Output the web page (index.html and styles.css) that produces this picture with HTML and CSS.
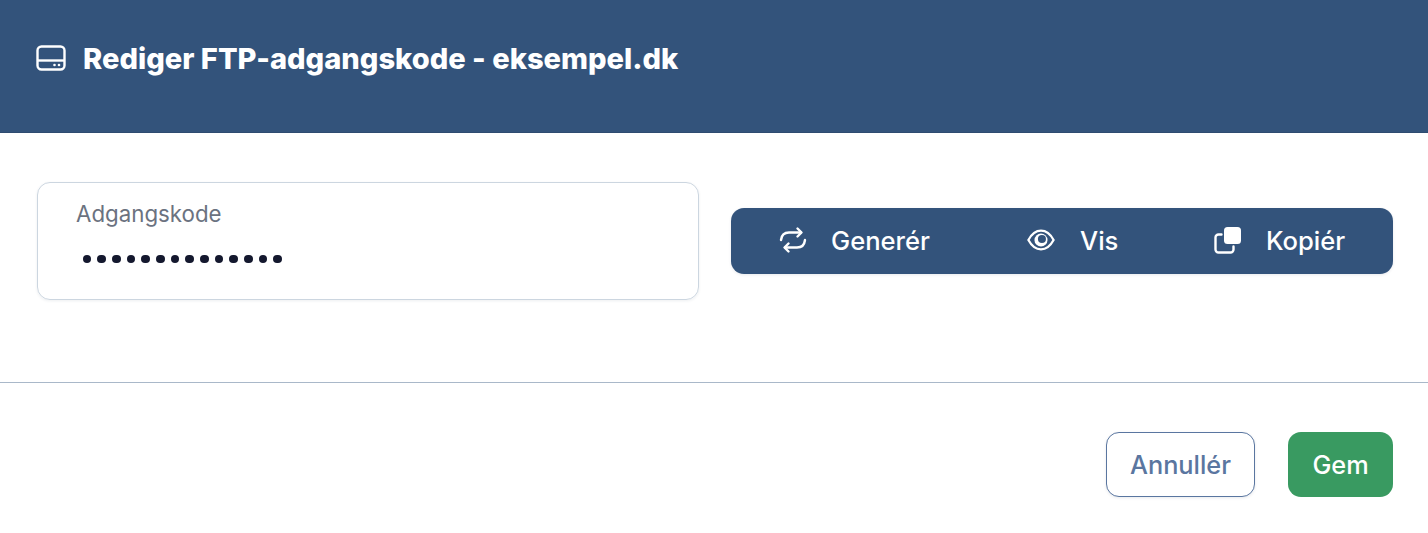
FILE: index.html
```html
<!DOCTYPE html>
<html lang="da">
<head>
    <meta charset="UTF-8">
    <title>Rediger FTP-adgangskode</title>
    <link rel="stylesheet" href="styles.css">
</head>
<body>
    <div class="modal">
        <header class="modal-header">
            <svg class="header-icon" viewBox="0 0 30 26" fill="none" stroke="#fff" stroke-width="2.400">
                <rect x="1.500" y="1.500" width="27" height="23" rx="4"/>
                <path d="M1.500 15.500h27"/>
                <circle cx="18.500" cy="20" r="1.300" fill="#fff" stroke="none"/>
                <circle cx="23" cy="20" r="1.300" fill="#fff" stroke="none"/>
            </svg>
            <h1 class="modal-title">Rediger FTP-adgangskode - eksempel.dk</h1>
        </header>
        <section class="modal-body">
            <div class="field">
                <label class="field-label">Adgangskode</label>
                <div class="field-dots">
                    <span class="dot"></span><span class="dot"></span><span class="dot"></span>
                    <span class="dot"></span><span class="dot"></span><span class="dot"></span>
                    <span class="dot"></span><span class="dot"></span><span class="dot"></span>
                    <span class="dot"></span><span class="dot"></span><span class="dot"></span>
                    <span class="dot"></span><span class="dot"></span>
                </div>
            </div>
            <div class="actions">
                <button class="action action-generate">
                    <svg class="action-icon" viewBox="0 0 28 28" fill="none" stroke="#fff" stroke-width="2.400" stroke-linecap="round" stroke-linejoin="round">
                        <path d="M18.500 2.500 22.500 6.500 18.500 10.500"/>
                        <path d="M22 6.500H10C5.500 6.500 2.500 9.500 2 14"/>
                        <path d="M9.500 25.500 5.500 21.500 9.500 17.500"/>
                        <path d="M6 21.500H18C22.500 21.500 25.500 18.500 26 14"/>
                    </svg>
                    <span>Generér</span>
                </button>
                <button class="action action-show">
                    <svg class="action-icon" viewBox="0 0 30 24" fill="none" stroke="#fff" stroke-width="2.400">
                        <path d="M1.500 12C5 5.500 9.500 2 15 2S25 5.500 28.500 12C25 18.500 20.500 22 15 22S5 18.500 1.500 12Z"/>
                        <circle cx="15" cy="12" r="7" fill="#fff" stroke="none"/>
                        <circle cx="16" cy="11" r="4.300" fill="#33537b" stroke="none"/>
                    </svg>
                    <span>Vis</span>
                </button>
                <button class="action action-copy">
                    <svg class="action-icon" viewBox="0 0 28 28" fill="none" stroke="#fff" stroke-width="2.400" stroke-linecap="round">
                        <rect x="10" y="1" width="17" height="17" rx="3.500" fill="#fff" stroke="none"/>
                        <path d="M7.500 8.500H4.500A3 3 0 0 0 1.500 11.500V23.500A3 3 0 0 0 4.500 26.500H16.500A3 3 0 0 0 19.500 23.500V20.500"/>
                    </svg>
                    <span>Kopiér</span>
                </button>
            </div>
        </section>
        <footer class="modal-footer">
            <button class="btn btn-cancel">Annullér</button>
            <button class="btn btn-save">Gem</button>
        </footer>
    </div>
</body>
</html>
```
FILE: styles.css
```css
body {
    margin: 0;
    background-color: #fff;
    font-family: Inter, sans-serif;
    overflow: hidden;
}
.modal {
    display: flex;
    flex-direction: column;
    height: 533px;
}
.modal-header {
    display: flex;
    align-items: center;
    gap: 17px;
    height: 133px;
    padding: 0 36px 16px;
    box-sizing: border-box;
    background-color: #33537b;
    border-bottom: 1px solid #2e4b70;
}
.header-icon {
    width: 30px;
    height: 26px;
}
.modal-title {
    margin: 0;
    font-size: 29.100px;
    font-weight: 800;
    color: #fff;
}
.modal-body {
    display: flex;
    align-items: center;
    gap: 32px;
    height: 250px;
    padding: 0 35px 33px 37px;
    box-sizing: border-box;
    border-bottom: 1px solid #a9b8c9;
}
.field {
    width: 662px;
    height: 118px;
    padding: 17px 39px 0 38px;
    box-sizing: border-box;
    border: 1px solid #ccd6e0;
    border-radius: 13px;
    box-shadow: 0 1px 3px rgba(30, 50, 80, 0.08);
}
.field-label {
    display: block;
    font-size: 22.300px;
    line-height: 28px;
    color: #6b7280;
}
.field-dots {
    display: flex;
    gap: 6px;
    margin-top: 26.500px;
    padding-left: 6.500px;
}
.dot {
    width: 8.700px;
    height: 8.700px;
    border-radius: 50%;
    background-color: #14182e;
}
.actions {
    display: flex;
    flex: 1;
    height: 66px;
    background-color: #33537b;
    border-radius: 13px;
    box-shadow: 0 1px 3px rgba(30, 50, 80, 0.1);
}
.action {
    display: flex;
    align-items: center;
    padding: 0 0 2px;
    border: none;
    background: none;
    font-family: inherit;
    font-size: 25.600px;
    font-weight: 450;
    color: #fff;
}
.action-generate {
    width: 296px;
    padding-left: 48px;
    gap: 24px;
    box-sizing: border-box;
}
.action-show {
    width: 187px;
    gap: 25px;
}
.action-copy {
    gap: 24px;
}
.action-icon {
    width: 28px;
    height: 28px;
}
.modal-footer {
    display: flex;
    justify-content: flex-end;
    gap: 33px;
    padding: 49px 35px 0 0;
}
.btn {
    height: 65px;
    border-radius: 13px;
    font-family: inherit;
    font-size: 25.300px;
    font-weight: 450;
    box-sizing: border-box;
}
.btn-cancel {
    width: 149px;
    border: 1px solid #5a76a0;
    background-color: #fff;
    color: #5a76a0;
    box-shadow: 0 1px 3px rgba(30, 50, 80, 0.1);
}
.btn-save {
    width: 105px;
    border: none;
    background-color: #399a61;
    color: #fff;
}
```
